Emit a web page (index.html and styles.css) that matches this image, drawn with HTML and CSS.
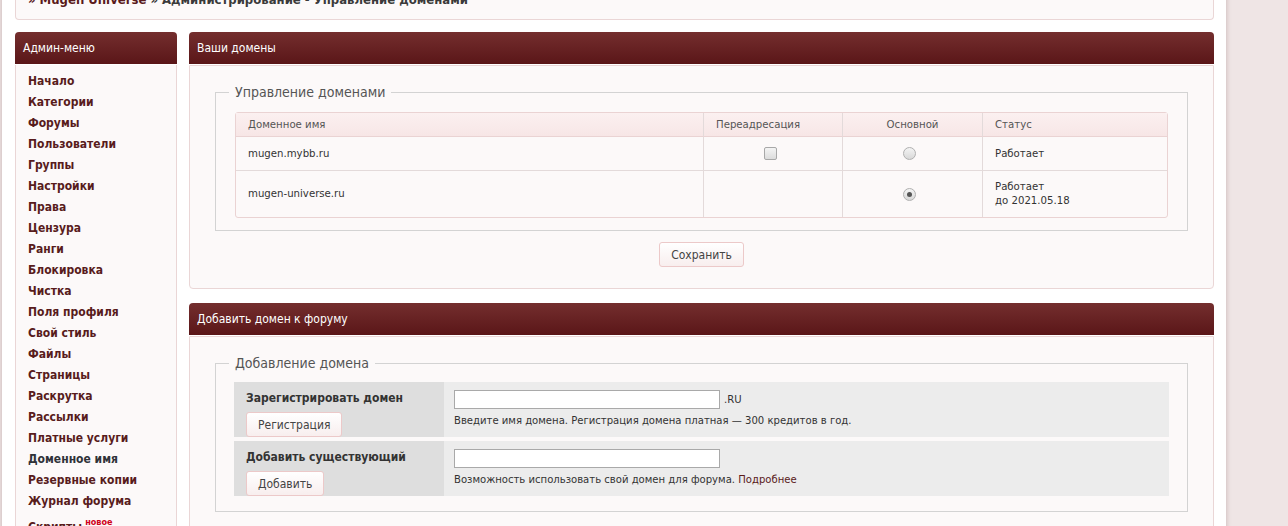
FILE: index.html
```html
<!DOCTYPE html>
<html lang="ru">
<head>
<meta charset="utf-8">
<title>Администрирование - Управление доменами</title>
<link rel="stylesheet" href="styles.css">
</head>
<body>
<div class="page">
  <div class="crumbs"><a href="#">» Mugen Universe</a> » Администрирование - Управление доменами</div>
  <div class="layout">
    <aside class="side">
      <div class="phead">Админ-меню</div>
      <ul class="menu">
        <li><a href="#">Начало</a></li>
        <li><a href="#">Категории</a></li>
        <li><a href="#">Форумы</a></li>
        <li><a href="#">Пользователи</a></li>
        <li><a href="#">Группы</a></li>
        <li><a href="#">Настройки</a></li>
        <li><a href="#">Права</a></li>
        <li><a href="#">Цензура</a></li>
        <li><a href="#">Ранги</a></li>
        <li><a href="#">Блокировка</a></li>
        <li><a href="#">Чистка</a></li>
        <li><a href="#">Поля профиля</a></li>
        <li><a href="#">Свой стиль</a></li>
        <li><a href="#">Файлы</a></li>
        <li><a href="#">Страницы</a></li>
        <li><a href="#">Раскрутка</a></li>
        <li><a href="#">Рассылки</a></li>
        <li><a href="#">Платные услуги</a></li>
        <li><a href="#" class="cur">Доменное имя</a></li>
        <li><a href="#">Резервные копии</a></li>
        <li><a href="#">Журнал форума</a></li>
        <li><a href="#">Скрипты</a> <sup class="new">новое</sup></li>
      </ul>
    </aside>
    <main class="main">
      <section class="panel">
        <div class="phead">Ваши домены</div>
        <div class="pbody">
          <fieldset class="fs">
            <legend>Управление доменами</legend>
            <table class="dt">
              <colgroup><col class="c1"><col class="c2"><col class="c3"><col class="c4"></colgroup>
              <thead>
                <tr><th>Доменное имя</th><th>Переадресация</th><th class="ctr">Основной</th><th>Статус</th></tr>
              </thead>
              <tbody>
                <tr class="r1"><td>mugen.mybb.ru</td><td class="ctr"><span class="chk"></span></td><td class="ctr"><span class="rad"></span></td><td>Работает</td></tr>
                <tr class="r2"><td>mugen-universe.ru</td><td></td><td class="ctr"><span class="rad on"></span></td><td>Работает<br>до 2021.05.18</td></tr>
              </tbody>
            </table>
          </fieldset>
          <div class="actions"><button class="btn">Сохранить</button></div>
        </div>
      </section>
      <section class="panel">
        <div class="phead">Добавить домен к форуму</div>
        <div class="pbody">
          <fieldset class="fs fs2">
            <legend>Добавление домена</legend>
            <div class="frow">
              <div class="fl"><strong>Зарегистрировать домен</strong><button class="btn">Регистрация</button></div>
              <div class="fr"><div class="inl"><span class="inp"></span><span class="ru">.RU</span></div><div class="help">Введите имя домена. Регистрация домена платная — 300 кредитов в год.</div></div>
            </div>
            <div class="frow">
              <div class="fl"><strong>Добавить существующий</strong><button class="btn">Добавить</button></div>
              <div class="fr"><div class="inl"><span class="inp"></span></div><div class="help">Возможность использовать свой домен для форума. <a href="#">Подробнее</a></div></div>
            </div>
          </fieldset>
        </div>
      </section>
    </main>
  </div>
</div>
</body>
</html>
```
FILE: styles.css
```css
html, body { margin: 0; padding: 0; }
body {
  background: #efe5e5;
  font-family: "DejaVu Sans Condensed", "DejaVu Sans", sans-serif;
  font-size: 11px;
  color: #333;
  overflow: hidden;
  height: 526px;
}
a { text-decoration: none; }
.page {
  width: 1199px;
  margin-left: 2px;
  padding: 0 12px 0 13px;
  background: #fff;
  box-shadow: 0 0 5px rgba(120, 80, 80, 0.35);
  min-height: 560px;
}
.crumbs {
  margin-top: -9px;
  padding: 0 12px 10px;
  line-height: 18px;
  font-size: 13px;
  font-weight: bold;
  color: #3a3a3a;
  border: 1px solid #ead6d6;
  border-top: 0;
  border-radius: 0 0 4px 4px;
  background: #fcf9f9;
}
.crumbs a { color: #5a1a1a; }
.layout {
  display: grid;
  grid-template-columns: 162px 1025px;
  column-gap: 12px;
  margin-top: 12px;
  align-items: start;
}
.phead {
  height: 32px;
  line-height: 32px;
  padding-left: 8px;
  color: #fff;
  font-size: 12px;
  background: linear-gradient(#742e2e, #5a1618);
  border-radius: 4px 4px 0 0;
  margin-bottom: 1px;
}
.menu {
  list-style: none;
  margin: 0;
  padding: 6px 0 20px 12px;
  border: 1px solid #ead6d6;
  border-top: 0;
  background: #fcf9f9;
}
.menu li { line-height: 21px; height: 21px; }
.menu a {
  font-weight: bold;
  font-size: 12px;
  color: #581c1c;
}
.menu a.cur { color: #2f3238; }
.new {
  color: #d0021b;
  font-weight: bold;
  font-size: 9px;
  vertical-align: 6px;
}
.panel + .panel { margin-top: 14px; }
.pbody {
  border: 1px solid #ead6d6;
  border-radius: 0 0 4px 4px;
  background: #fcf9f9;
  padding: 17px 25px 21px;
}
.fs {
  margin: 0;
  padding: 0 19px 12px;
  border: 1px solid #d3d3d3;
}
.fs legend {
  font-size: 14px;
  color: #555;
  padding: 0 6px;
  margin-left: -6px;
  line-height: 18px;
}
.dt {
  width: 100%;
  border-collapse: separate;
  border-spacing: 0;
  border: 1px solid #ead3d3;
  border-radius: 3px;
  margin-top: 11px;
  table-layout: fixed;
  font-size: 11.3px;
}
.dt .c1 { width: 467px; }
.dt .c2 { width: 139px; }
.dt .c3 { width: 140px; }
.dt th {
  height: 23px;
  font-weight: normal;
  color: #555;
  text-align: left;
  padding: 0 12px;
  background: linear-gradient(#fbf0f0, #f7e6e6);
  border-bottom: 1px solid #ead3d3;
}
.dt td {
  padding: 0 12px;
  color: #333;
  line-height: 14px;
}
.dt th + th, .dt td + td { border-left: 1px solid #e3dada; }
.dt .r1 td { height: 33px; border-bottom: 1px solid #e3dada; }
.dt .r2 td { height: 46px; }
.dt .ctr { text-align: center; }
.dt td.ctr { padding: 0 14px 0 8px; }
.chk {
  display: inline-block;
  width: 11px;
  height: 11px;
  border: 1px solid #a8a8a8;
  border-radius: 2px;
  background: linear-gradient(#f4f4f4, #dcdcdc);
  vertical-align: middle;
}
.rad {
  display: inline-block;
  width: 11px;
  height: 11px;
  border: 1px solid #b0b0b0;
  border-radius: 50%;
  background: linear-gradient(#f4f4f4, #d8d8d8);
  vertical-align: middle;
  position: relative;
}
.rad.on::after {
  content: "";
  position: absolute;
  left: 3px;
  top: 3px;
  width: 5px;
  height: 5px;
  border-radius: 50%;
  background: #555;
}
.actions {
  display: flex;
  justify-content: center;
  margin-top: 11px;
}
.btn {
  font-family: inherit;
  font-size: 12px;
  color: #444;
  height: 25px;
  padding: 0 11px;
  border: 1px solid #ecc9c9;
  border-radius: 3px;
  background: linear-gradient(#fff, #f8eeee);
}
.fs2 { padding: 0 18px 15px; }
.fs2 legend { margin-left: -5px; }
.frow {
  display: grid;
  grid-template-columns: 210px 1fr;
}
.frow + .frow { margin-top: 4px; }
.fs2 .frow:first-of-type { margin-top: 10px; }
.fl {
  background: #dedede;
  padding: 9px 12px 0;
  display: flex;
  flex-direction: column;
  align-items: flex-start;
}
.fl strong { font-size: 12px; line-height: 14px; color: #333; margin-bottom: 7px; }
.fr {
  background: #ececec;
  padding: 8px 10px 0;
  min-height: 47px;
  font-size: 11.2px;
}
.inl { display: flex; align-items: center; height: 19px; }
.inp {
  width: 264px;
  height: 17px;
  border: 1px solid #a9a9a9;
  background: #fff;
}
.ru { margin-left: 4px; color: #333; }
.help { margin-top: 5px; line-height: 14px; color: #333; }
.help a { color: #5a1a1a; }
```
